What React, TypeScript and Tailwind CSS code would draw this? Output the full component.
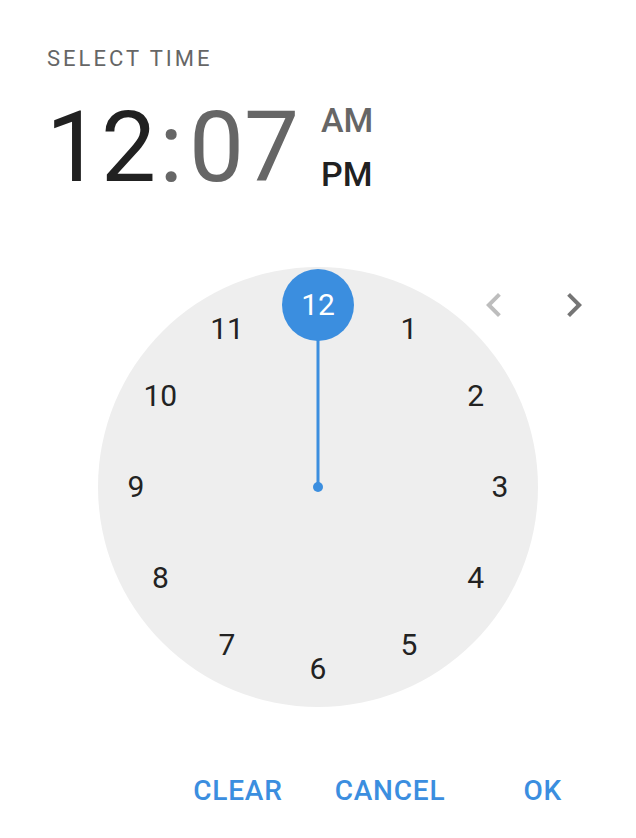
const BLUE = "#3b8edf"

// Dial geometry: circle is 440px across, numbers sit 182px from the centre
const SIZE = 440
const C = SIZE / 2
const R = 182

const hours = [12, 1, 2, 3, 4, 5, 6, 7, 8, 9, 10, 11]

const ChevronLeftIcon = ({ className }: { className?: string }) => (
  <svg viewBox="0 0 24 24" className={className} fill="currentColor">
    <path d="M15.41 7.41L14 6l-6 6 6 6 1.41-1.41L10.83 12z" />
  </svg>
)

const ChevronRightIcon = ({ className }: { className?: string }) => (
  <svg viewBox="0 0 24 24" className={className} fill="currentColor">
    <path d="M10 6L8.59 7.41 13.17 12l-4.58 4.59L10 18l6-6z" />
  </svg>
)

const Dial = ({ selected }: { selected: number }) => {
  const selIdx = hours.indexOf(selected)
  const selAngle = (selIdx * 30 * Math.PI) / 180
  const sx = C + R * Math.sin(selAngle)
  const sy = C - R * Math.cos(selAngle)

  return (
    <div className="relative mx-auto h-[440px] w-[440px] rounded-full bg-[#eeeeee]">
      <svg className="absolute inset-0" width={SIZE} height={SIZE} viewBox={`0 0 ${SIZE} ${SIZE}`}>
        <line x1={C} y1={C} x2={sx} y2={sy} stroke={BLUE} strokeWidth={3} />
        <circle cx={C} cy={C} r={5} fill={BLUE} />
        <circle cx={sx} cy={sy} r={36} fill={BLUE} />
      </svg>
      {hours.map((h, i) => {
        const a = (i * 30 * Math.PI) / 180
        const x = C + R * Math.sin(a)
        const y = C - R * Math.cos(a)
        return (
          <span
            key={h}
            className={`absolute -translate-x-1/2 -translate-y-1/2 text-[30px] leading-none ${
              h === selected ? "text-white" : "text-[#222222]"
            }`}
            style={{ left: x, top: y }}
          >
            {h}
          </span>
        )
      })}
    </div>
  )
}

export default function App() {
  return (
    <div className="flex h-[838px] w-[636px] flex-col bg-white font-['Roboto',sans-serif]">
      <div className="pl-[47px] pt-[48px]">
        <div className="text-[22px] leading-none tracking-[3px] text-[#666666]">SELECT TIME</div>
        <div className="mt-[29px] flex items-start">
          <div className="-ml-[1px] flex text-[98px] leading-none">
            <span className="text-[#212121]">12</span>
            <span className="ml-[3px] mr-[6px] text-[#666666]">:</span>
            <span className="text-[#666666]">07</span>
          </div>
          <div className="ml-[22px] mt-[4px] flex flex-col gap-[20px] text-[34px] font-medium leading-none">
            <span className="text-[#666666]">AM</span>
            <span className="text-[#212121]">PM</span>
          </div>
        </div>
      </div>

      <div className="relative mt-[70px]">
        <Dial selected={12} />
        <ChevronLeftIcon className="absolute left-[470px] top-[14px] h-12 w-12 text-[#bdbdbd]" />
        <ChevronRightIcon className="absolute left-[550px] top-[14px] h-12 w-12 text-[#757575]" />
      </div>

      <div className="mt-[70px] flex justify-end pr-[66px] text-[28px] font-medium leading-none tracking-[0.8px] text-[#3b8edf]">
        <button className="px-2">CLEAR</button>
        <button className="ml-[36px] px-2">CANCEL</button>
        <button className="ml-[62px] px-2">OK</button>
      </div>
    </div>
  )
}
